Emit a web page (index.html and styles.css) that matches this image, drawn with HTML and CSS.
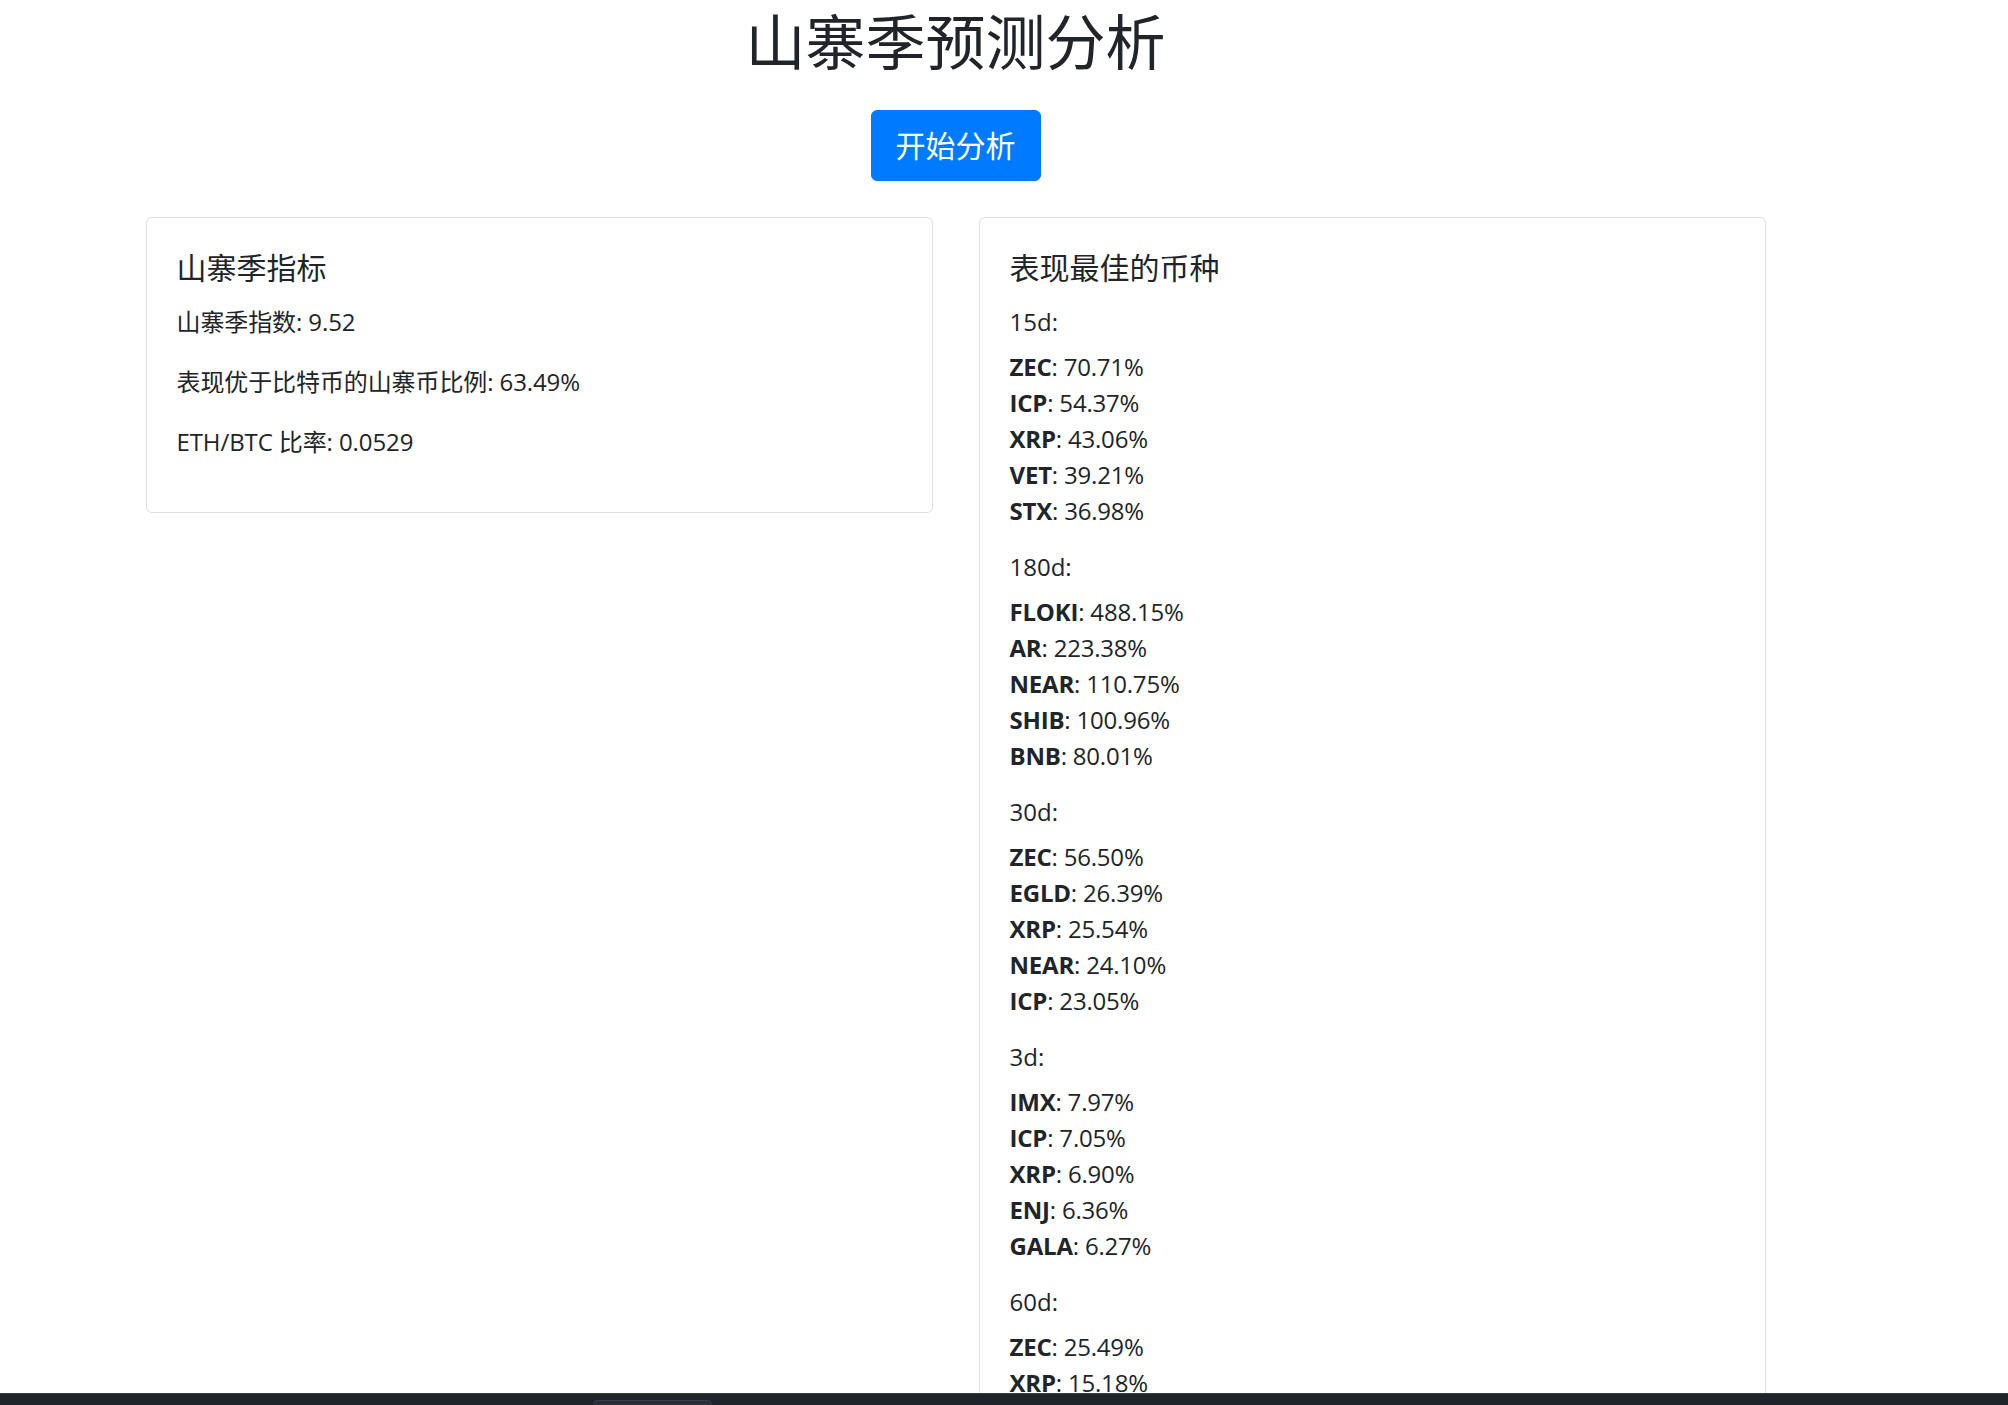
FILE: index.html
```html
<!DOCTYPE html>
<html lang="zh-CN">
<head>
<meta charset="utf-8">
<title>山寨季预测分析</title>
<link rel="stylesheet" href="styles.css">
</head>
<body>
<div class="page">
  <h1 class="title">山寨季预测分析</h1>
  <div class="actions"><button class="btn-primary" type="button">开始分析</button></div>
  <div class="container">
    <div class="row">
      <div class="card">
        <h5 class="card-title">山寨季指标</h5>
        <p class="stat">山寨季指数: 9.52</p>
        <p class="stat">表现优于比特币的山寨币比例: 63.49%</p>
        <p class="stat">ETH/BTC 比率: 0.0529</p>
      </div>
      <div class="card">
        <h5 class="card-title">表现最佳的币种</h5>
        <h6 class="period">15d:</h6>
        <ul class="coins">
          <li><strong>ZEC</strong>: 70.71%</li>
          <li><strong>ICP</strong>: 54.37%</li>
          <li><strong>XRP</strong>: 43.06%</li>
          <li><strong>VET</strong>: 39.21%</li>
          <li><strong>STX</strong>: 36.98%</li>
        </ul>
        <h6 class="period">180d:</h6>
        <ul class="coins">
          <li><strong>FLOKI</strong>: 488.15%</li>
          <li><strong>AR</strong>: 223.38%</li>
          <li><strong>NEAR</strong>: 110.75%</li>
          <li><strong>SHIB</strong>: 100.96%</li>
          <li><strong>BNB</strong>: 80.01%</li>
        </ul>
        <h6 class="period">30d:</h6>
        <ul class="coins">
          <li><strong>ZEC</strong>: 56.50%</li>
          <li><strong>EGLD</strong>: 26.39%</li>
          <li><strong>XRP</strong>: 25.54%</li>
          <li><strong>NEAR</strong>: 24.10%</li>
          <li><strong>ICP</strong>: 23.05%</li>
        </ul>
        <h6 class="period">3d:</h6>
        <ul class="coins">
          <li><strong>IMX</strong>: 7.97%</li>
          <li><strong>ICP</strong>: 7.05%</li>
          <li><strong>XRP</strong>: 6.90%</li>
          <li><strong>ENJ</strong>: 6.36%</li>
          <li><strong>GALA</strong>: 6.27%</li>
        </ul>
        <h6 class="period">60d:</h6>
        <ul class="coins">
          <li><strong>ZEC</strong>: 25.49%</li>
          <li><strong>XRP</strong>: 15.18%</li>
        </ul>
      </div>
    </div>
  </div>
</div>
<div class="taskbar"><div class="taskbar-tab"></div></div>
</body>
</html>
```
FILE: styles.css
```css
html {
  overflow: hidden;
}
body {
  margin: 0;
  background: #ffffff;
  color: #212529;
  font-family: "Open Sans", "Noto Sans CJK SC", sans-serif;
  font-size: 24px;
  line-height: 36px;
}
.page {
  width: 1911px;
}
.title {
  margin: 6px 0 32px;
  font-size: 60px;
  line-height: 72px;
  font-weight: 400;
  text-align: center;
}
.actions {
  text-align: center;
  margin-bottom: 36px;
}
.btn-primary {
  display: inline-block;
  height: 71px;
  padding: 0 24px;
  border: 1px solid #007bff;
  border-radius: 6px;
  background: #007bff;
  color: #ffffff;
  font-family: "Open Sans", "Noto Sans CJK SC", sans-serif;
  font-size: 30px;
  line-height: 45px;
  cursor: pointer;
}
.container {
  width: 1620px;
  margin: 0 auto;
}
.row {
  display: grid;
  grid-template-columns: 1fr 1fr;
  column-gap: 46px;
  align-items: start;
}
.card {
  border: 1px solid #dfdfdf;
  border-radius: 6px;
  padding: 32px 30px 28px;
}
.card-title {
  margin: 0 0 18px;
  font-size: 30px;
  line-height: 36px;
  font-weight: 400;
}
.stat {
  margin: 0 0 24px;
  letter-spacing: -0.1px;
}
.period {
  margin: 0 0 9px;
  font-size: 24px;
  line-height: 36px;
  font-weight: 400;
}
.coins {
  list-style: none;
  margin: 0 0 20px;
  padding: 0;
  letter-spacing: -0.2px;
}
.coins strong {
  font-weight: 700;
}
.taskbar {
  position: fixed;
  left: 0;
  right: 0;
  bottom: 0;
  height: 11px;
  background: #1f232a;
  border-top: 1px solid #3a3e44;
}
.taskbar-tab {
  position: absolute;
  left: 593px;
  top: 6px;
  width: 117px;
  height: 10px;
  border-radius: 4px 4px 0 0;
  background: #2a2f37;
  border: 1px solid #3a3f47;
}
```
